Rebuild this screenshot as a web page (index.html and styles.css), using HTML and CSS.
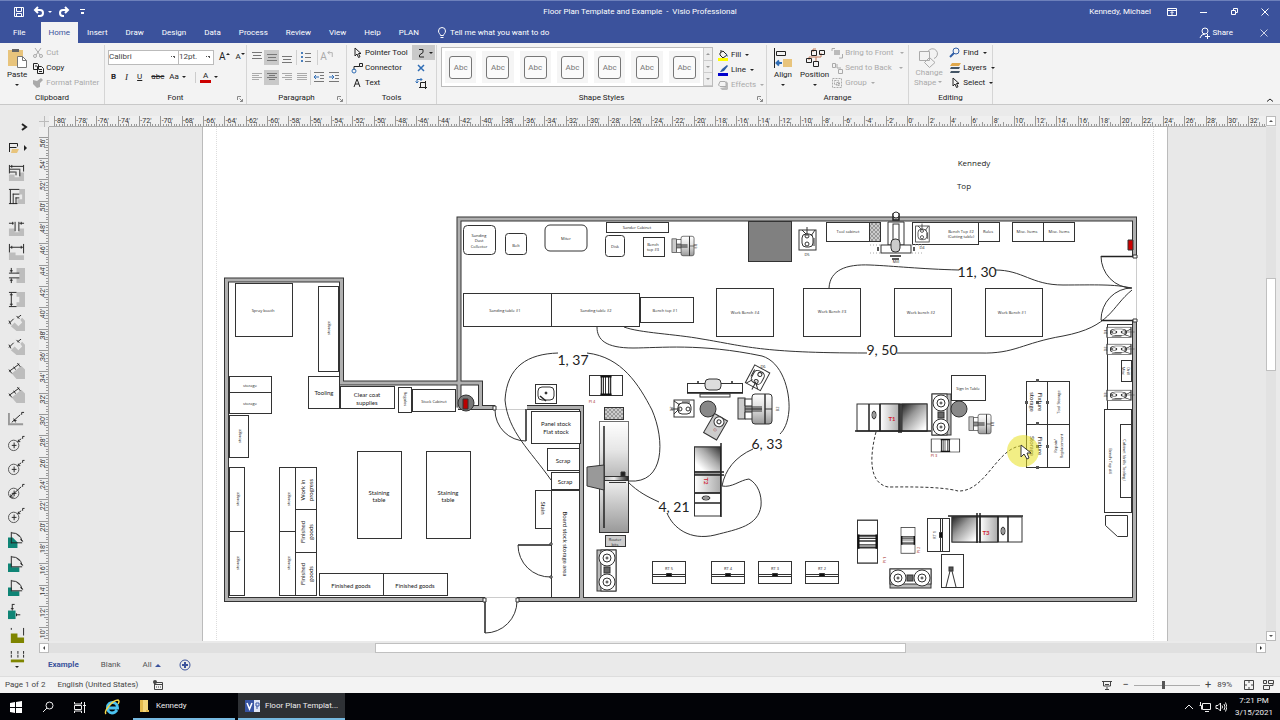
FILE: index.html
```html
<!DOCTYPE html>
<html lang="en">
<head>
<meta charset="utf-8">
<title>Floor Plan Template and Example - Visio Professional</title>
<link rel="stylesheet" href="styles.css">
</head>
<body>
<svg class="defs" aria-hidden="true">
  <symbol id="i-save" viewBox="0 0 12 12"><path class="ln" d="M1.5 1.5h9v9h-9zM3.5 1.5v4h5v-4M3.5 10.500v-3h5v3"/></symbol>
  <symbol id="i-undo" viewBox="0 0 12 12"><path class="ln thick" d="M5 1 2 4l3 3M2 4h5a2.800 2.800 0 0 1 0 6H5"/></symbol>
  <symbol id="i-redo" viewBox="0 0 12 12"><path class="ln thick" d="M7 1l3 3-3 3M10 4H5a2.800 2.800 0 0 0 0 6h1"/></symbol>
  <symbol id="i-cursor" viewBox="0 0 12 12"><path class="ln" d="M4 1v8l2-2 1.500 3.500 1.500-.7L7.500 6.500H10z"/></symbol>
  <symbol id="i-x" viewBox="0 0 12 12"><path class="ln" d="M2.500 2.500l7 7M9.500 2.500l-7 7"/></symbol>
  <symbol id="i-launch" viewBox="0 0 6 6"><path class="ln" d="M.5 4V.5H4M2.500 2.500l3 3M5.500 3v2.500H3"/></symbol>
  <symbol id="d-h2" viewBox="0 0 18 18"><path class="gy" d="M1 10h7v3h9v5H1z"/><path class="bk" d="M1.500 1v9M16.500 1v10M2 4.500h14M4 3v3M14 3v3"/></symbol>
  <symbol id="d-gap" viewBox="0 0 18 18"><path class="gy" d="M1 10h6v4h5v-4h5v8H1z"/><path class="bk" d="M1 4.500h5M5 3v3M7.500 3v10M11.500 3v10M12 4.500h5M14 3v3"/></symbol>
  <symbol id="d-v" viewBox="0 0 18 18"><path class="gy" d="M9 1h9v16H9v-5h3V6H9z"/><path class="bk" d="M1 1.500h8M1 16.500h8M3.500 2v14M2 4h3M2 14h3"/></symbol>
  <symbol id="d-vg" viewBox="0 0 18 18"><path class="gy" d="M9 1h9v16H9v-5h3V7H9z"/><path class="bk" d="M1 6.500h11M1 11.500h11M3.500 1v5M2 4h3M3.500 12v5M2 14h3"/></symbol>
  <symbol id="d-top" viewBox="0 0 18 18"><path class="gy" d="M1 11h6v3h5V9h5v9H1z"/><path class="bk" d="M1.500 1v9M16.500 1v7M2 2.500h14M2 5.500h10M2 8.500h6M12.500 5v8M8.500 8v4M4 1v3"/></symbol>
  <symbol id="d-side" viewBox="0 0 18 18"><path class="gy" d="M12 1h6v16h-8v-5h5V7h-3z"/><path class="bk" d="M1 1.500h11M2.500 2v15M5.500 6v11M8.500 10v7M1 16.500h9M5 6.500h7M8 10.500h4"/></symbol>
  <symbol id="d-diag" viewBox="0 0 18 18"><path class="gy" d="M3 12l4-4 4 4 4-4-2-3 2-2 3 3v11H9z"/><path class="bk" d="M1 9l5-5M1 6l2 4M10 3l4-3M9 1l3 3"/></symbol>
  <symbol id="d-diag2" viewBox="0 0 18 18"><path class="gy" d="M4 11 14 3l4 4v10H9z"/><path class="bk" d="M1 9l11-8M1 7l3 4M10 0l3 4M6 4l2 3"/></symbol>
  <symbol id="d-rad" viewBox="0 0 18 18"><path class="gyl" d="M1 2v12h15"/><path class="bk" d="M4 12 13 4M6 8l2 4M14.500 4V1.500h2.500M6 10h3"/></symbol>
  <symbol id="d-cir" viewBox="0 0 18 18"><circle class="ring" cx="6" cy="11" r="5.500"/><path class="bk" d="M4 11h5M6.500 8v6M10 7l4-3M11 5v2h2M15.500 4V1.500h2"/></symbol>
  <symbol id="d-dia" viewBox="0 0 18 18"><circle class="ring" cx="6" cy="11" r="5.500"/><path class="bk" d="M2 15 14 4M6.500 8v6M4 11h5M3 12v3h3M15.500 4V1.500h2"/></symbol>
  <symbol id="d-ang" viewBox="0 0 18 18"><path class="tl" d="M0 7h5l5 5v6H0z"/><path class="bk" d="M3.500 1v12M3 12.500h12M4 2q9 0 11 9M10 4l2 2M13 9l3 2"/></symbol>
  <symbol id="d-ang2" viewBox="0 0 18 18"><path class="tl" d="M0 9h4v4h8v5H0z"/><path class="bk" d="M3.500 1v11M3 12.500h12M4 2q9 0 11 9M10 4l2 2M13 9l3 2"/></symbol>
  <symbol id="d-ord" viewBox="0 0 18 18"><path class="tl" d="M0 8h8v9H0z"/><path class="bk" d="M4.500 2v6M3 6h3M4 1.500h3M9 12.500h4M9 11v3"/></symbol>
  <symbol id="d-olive" viewBox="0 0 18 18"><path class="ol" d="M3 7h7v4h7v6H3z"/><path class="bk" d="M3.500 1v2M16.500 1v8"/></symbol>
</svg>

<header class="titlebar">
  <div class="quick">
    <button aria-label="Save"><svg class="ic"><use href="#i-save"/></svg></button>
    <button aria-label="Undo"><svg class="ic"><use href="#i-undo"/></svg><i class="dd"></i></button>
    <button aria-label="Redo"><svg class="ic"><use href="#i-redo"/></svg></button>
    <button aria-label="Customize toolbar"><span class="over"></span></button>
  </div>
  <h1>Floor Plan Template and Example&nbsp; -&nbsp; Visio Professional</h1>
  <div class="account">
    <span class="user">Kennedy, Michael</span>
    <button aria-label="Ribbon display"><svg class="ic" viewBox="0 0 12 12"><path class="ln" d="M1.500 2.500h9v7h-9zM1.500 4.500h9M6 9V6M4.500 7 6 5.500 7.500 7"/></svg></button>
    <button aria-label="Minimize"><svg class="ic" viewBox="0 0 12 12"><path class="ln" d="M3 6.500h7"/></svg></button>
    <button aria-label="Restore"><svg class="ic" viewBox="0 0 12 12"><path class="ln" d="M3.500 4.500h4v4h-4zM5.500 4v-1.500h4v4H8"/></svg></button>
    <button aria-label="Close"><svg class="ic"><use href="#i-x"/></svg></button>
  </div>
</header>
<nav class="tabs">
  <button class="file">File</button><button class="on">Home</button><button>Insert</button><button>Draw</button><button>Design</button><button>Data</button><button>Process</button><button>Review</button><button>View</button><button>Help</button><button>PLAN</button>
  <button class="tell"><svg class="ic" viewBox="0 0 12 12"><path class="ln" d="M4.500 8.500C4.500 7 2.500 6.500 2.500 4a3.500 3.500 0 0 1 7 0c0 2.500-2 3-2 4.500zM4.500 10.500h3"/></svg>Tell me what you want to do</button>
  <button class="share"><svg class="ic" viewBox="0 0 12 12"><circle class="ln" cx="6" cy="4" r="3"/><path class="ln" d="M1 11q1-4 5-4M6 9.500h5M8.500 7v5"/></svg>Share</button>
  <button class="closedoc" aria-label="Close document"><svg class="ic"><use href="#i-x"/></svg></button>
</nav>

<section class="ribbon">
  <div class="group"><div class="body clip">
    <button class="big"><svg class="ic20" viewBox="0 0 20 20"><path fill="#e8c47c" d="M1 2h15v16H1z"/><path fill="#666" d="M5 1h7v3H5z"/><path fill="#fff" stroke="#777" d="M10.500 8.500h5l4 4v7h-9z"/><path fill="none" stroke="#777" d="M15.500 8.500v4h4"/></svg>Paste<i class="dd"></i></button>
    <div class="rows">
      <button class="off"><svg class="ic" viewBox="0 0 12 12"><path class="ln" d="M3 1l5 7M9 1 4 8"/><circle class="ln" cx="3" cy="9" r="1.500"/><circle class="ln" cx="9" cy="9" r="1.500"/></svg>Cut</button>
      <button><svg class="ic" viewBox="0 0 12 12"><path class="ln" d="M1.500 1.500h4l1 1v5h-5zM5.500 4.500h4l2 2v5h-6zM7 7.500h3M7 9.500h3M3 4h2"/></svg>Copy</button>
      <button class="off"><svg class="ic" viewBox="0 0 12 12"><path fill="#aaa" d="M1 3l4 1 4-3 2 2-3 3v4l-3 1-4-4z"/></svg>Format Painter</button>
    </div>
  </div><h2>Clipboard</h2></div>

  <div class="group"><div class="body fontg">
    <div class="line">
      <select class="face" aria-label="Font"><option>Calibri</option></select><select class="size" aria-label="Font size"><option>12pt.</option></select>
      <button class="grow" aria-label="Grow font">A<i class="du tiny"></i></button><button class="grow sm" aria-label="Shrink font">A<i class="dd tiny"></i></button>
    </div>
    <div class="line fmt">
      <button><b>B</b></button><button><em>I</em></button><button><u>U</u></button><button><s>abc</s></button><button>Aa<i class="dd"></i></button><button class="color"><span>A</span><i class="dd"></i></button>
    </div>
  </div><h2>Font</h2><svg class="launch"><use href="#i-launch"/></svg></div>

  <div class="group"><div class="body para">
    <div class="line">
      <button aria-label="Top"><svg class="ic" viewBox="0 0 12 12"><path class="ln" d="M1 1.500h10M2 4.500h8M1 7.500h10"/></svg></button>
      <button class="sel" aria-label="Middle"><svg class="ic" viewBox="0 0 12 12"><path class="ln" d="M1 3.500h10M2 6.500h8M1 9.500h10"/></svg></button>
      <button aria-label="Bottom"><svg class="ic" viewBox="0 0 12 12"><path class="ln" d="M1 5.500h10M2 8.500h8M1 11.500h10"/></svg></button>
      <button class="bar" aria-label="Bullets"><svg class="ic" viewBox="0 0 12 12"><path fill="#4a7ebb" d="M1 1h2v2H1zM1 5h2v2H1zM1 9h2v2H1z"/><path class="ln" d="M5 2.500h6M5 6.500h6M5 10.500h6"/></svg></button>
      <button class="bar off rot" aria-label="Rotate text">A<svg class="ic8" viewBox="0 0 8 8"><path class="ln" d="M6 8V3H1M3 1 1 3l2 2"/></svg></button>
    </div>
    <div class="line">
      <button class="off" aria-label="Left"><svg class="ic" viewBox="0 0 12 12"><path class="ln" d="M1 2.500h10M1 4.500h7M1 6.500h10M1 8.500h7"/></svg></button>
      <button class="sel" aria-label="Center"><svg class="ic" viewBox="0 0 12 12"><path class="ln" d="M1 2.500h10M3 4.500h6M1 6.500h10M3 8.500h6"/></svg></button>
      <button class="off" aria-label="Right"><svg class="ic" viewBox="0 0 12 12"><path class="ln" d="M1 2.500h10M4 4.500h7M1 6.500h10M4 8.500h7"/></svg></button>
      <button class="off" aria-label="Justify"><svg class="ic" viewBox="0 0 12 12"><path class="ln" d="M1 2.500h10M1 4.500h10M1 6.500h10M1 8.500h10"/></svg></button>
      <button class="bar tight" aria-label="Decrease indent"><svg class="ic" viewBox="0 0 12 12"><path class="ln" d="M1 1.500h10M7 4.500h4M7 7.500h4M1 10.500h10"/><path stroke="#2f6db5" fill="none" d="M6 6H1M3 4 1 6l2 2"/></svg></button>
      <button aria-label="Increase indent"><svg class="ic" viewBox="0 0 12 12"><path class="ln" d="M1 1.500h10M7 4.500h4M7 7.500h4M1 10.500h10"/><path stroke="#2f6db5" fill="none" d="M1 6h5M4 4l2 2-2 2"/></svg></button>
    </div>
  </div><h2>Paragraph</h2><svg class="launch"><use href="#i-launch"/></svg></div>

  <div class="group"><div class="body tools">
    <div class="rows">
      <button><svg class="ic"><use href="#i-cursor"/></svg>Pointer Tool</button>
      <button><svg class="ic" viewBox="0 0 12 12"><path class="ln" d="M8.500 1.500h3v3h-3zM3 8V4.500h5.500"/><circle cx="3" cy="9" r="2" fill="none" stroke="#2f6db5"/></svg>Connector</button>
      <button><svg class="ic" viewBox="0 0 12 12"><path class="ln" d="M3 10 6 2l3 8M4 7h4"/></svg>Text</button>
    </div>
    <div class="rows">
      <button class="sel free" aria-label="Freeform"><svg class="ic" viewBox="0 0 12 12"><path class="ln" d="M4 2.500h4v3L4.500 8v2H9"/></svg><i class="dd"></i></button>
      <button aria-label="Connection point"><svg class="ic" viewBox="0 0 12 12"><path stroke="#2f6db5" stroke-width="1.500" d="M3 3l6 6M9 3 3 9"/></svg></button>
      <button aria-label="Text block"><svg class="ic" viewBox="0 0 12 12"><path class="ln" d="M5.500 5.500h5v5h-5zM4 10.500h8M10.500 4v8"/><path fill="none" stroke="#2f6db5" d="M2 6V2.500h5M.5 4.500 2 6l1.500-1.500M5.500 1 7 2.500 5.500 4"/></svg></button>
    </div>
  </div><h2>Tools</h2></div>

  <div class="group"><div class="body styles">
    <div class="gallery">
      <button><span>Abc</span></button><button><span>Abc</span></button><button><span>Abc</span></button><button><span>Abc</span></button><button><span>Abc</span></button><button><span>Abc</span></button><button><span>Abc</span></button>
      <div class="spin"><button aria-label="Up"><i class="du tiny"></i></button><button aria-label="Down"><i class="dd"></i></button><button aria-label="More"><i class="dd"></i></button></div>
    </div>
    <div class="rows">
      <button><svg class="ic" viewBox="0 0 12 12"><path class="ln" d="M3 4l3-2 4 4-4 3-3-3zM4 3V1"/><path fill="#4a7ebb" d="M9 4l2 3-1 1z"/><path fill="#ff0" d="M1 9h10v3H1z"/></svg>Fill<i class="dd"></i></button>
      <button><svg class="ic" viewBox="0 0 12 12"><path fill="#2f5da5" d="M3 8l2-3 5-4 1 1-4 5-3 1z"/><path fill="#00c" d="M1 9h10v3H1z"/></svg>Line<i class="dd"></i></button>
      <button class="off"><svg class="ic" viewBox="0 0 12 12"><path fill="#bbb" d="M3 9l2 2h5l1-1V4L9 2v6z"/><path class="ln" d="M3 2.500h5q1 0 1 2v3H3L1.500 6z"/></svg>Effects<i class="dd"></i></button>
    </div>
  </div><h2>Shape Styles</h2><svg class="launch"><use href="#i-launch"/></svg></div>

  <div class="group"><div class="body arrange">
    <button class="big"><svg class="ic20" viewBox="0 0 20 20"><path class="ln" d="M1.500 0v20M3.500 3.500h9v4h-9z"/><path fill="#e8c47c" d="M10 11h9v8h-9z"/><path fill="none" stroke="#2f6db5" stroke-width="2" d="M9 15H4M6 12.500 3.500 15 6 17.500"/></svg>Align<i class="dd"></i></button>
    <button class="big"><svg class="ic20" viewBox="0 0 20 20"><path fill="none" stroke="#c07a5a" d="M8 4v-3h3M4 12V9h12V5M11 9v4"/><path class="ln" d="M6.500 2.500h5v5h-5zM14.500 2.500h5v4h-5zM1.500 10.500h5v4h-5zM8.500 13.500h5v5h-5z"/></svg>Position<i class="dd"></i></button>
    <div class="rows">
      <button class="off"><svg class="ic" viewBox="0 0 12 12"><path fill="#bbb" d="M3 3h6v5H3z"/><path class="ln" d="M1 4V1.500h3M11.500 7v4H8"/></svg>Bring to Front<i class="dd far"></i></button>
      <button class="off"><svg class="ic" viewBox="0 0 12 12"><path class="ln" d="M1.500 1.500h3v4h-3zM7.500 7.500h4v4h-4zM6 2v4h4"/></svg>Send to Back<i class="dd far"></i></button>
      <button class="off"><svg class="ic" viewBox="0 0 12 12"><path class="ln" d="M1.500 1.500h9v9h-9zM3.500 3.500h4v4h-4zM5.500 5.500h3v3h-3z" stroke-dasharray="2 1"/></svg>Group<i class="dd"></i></button>
    </div>
  </div><h2>Arrange</h2></div>

  <div class="group"><div class="body edit">
    <button class="big off"><svg class="ic20" viewBox="0 0 20 20"><path class="ln" d="M.5 3.500h10v9H.5zM10.500 9.500l5.500 5-5.500 5-5-5z"/><path class="ln" d="M9 3.500a5 5 0 1 1 6 7"/></svg>Change<br>Shape<i class="dd"></i></button>
    <div class="rows">
      <button><svg class="ic" viewBox="0 0 12 12"><circle cx="7" cy="4" r="3" fill="none" stroke="#2f5da5"/><path stroke="#2f5da5" stroke-width="2" d="M5 6 1 10"/></svg>Find<i class="dd"></i></button>
      <button><svg class="ic" viewBox="0 0 12 12"><path fill="#e0a84c" d="M3 1h9l-2 3H1z"/><path fill="#456" d="M2 5h9l-1 2H1zM2 9h9l-1 2H1z"/></svg>Layers<i class="dd"></i></button>
      <button><svg class="ic"><use href="#i-cursor"/></svg>Select<i class="dd"></i></button>
    </div>
  </div><h2>Editing</h2></div>
  <button class="collapse" aria-label="Collapse ribbon"><svg class="ic" viewBox="0 0 12 12"><path class="ln" d="M3 7.500 6 5l3 2.500"/></svg></button>
</section>

<main class="work">
  <aside class="stencil">
    <button class="chev" aria-label="Expand"><svg class="ic" viewBox="0 0 12 12"><path class="ln thick" d="M4 3l4 3-4 3"/></svg></button>
    <button class="shapes" aria-label="Shapes"><svg class="ic" viewBox="0 0 12 12"><path class="ln" d="M1.500 1v9M1.500 1.500h8v3M1.500 5.500h7"/><path fill="#e8c47c" d="M4 7h7l-2 4H3z"/></svg><i class="dr"></i></button>
    <svg class="st"><use href="#d-top"/></svg><svg class="st"><use href="#d-side"/></svg>
    <svg class="st skip"><use href="#d-gap"/></svg><svg class="st"><use href="#d-h2"/></svg><svg class="st"><use href="#d-vg"/></svg><svg class="st"><use href="#d-v"/></svg><svg class="st"><use href="#d-diag"/></svg><svg class="st"><use href="#d-diag"/></svg><svg class="st"><use href="#d-diag2"/></svg><svg class="st"><use href="#d-diag2"/></svg><svg class="st"><use href="#d-rad"/></svg><svg class="st"><use href="#d-cir"/></svg><svg class="st"><use href="#d-cir"/></svg><svg class="st"><use href="#d-dia"/></svg><svg class="st"><use href="#d-cir"/></svg><svg class="st"><use href="#d-ang"/></svg><svg class="st"><use href="#d-ang2"/></svg><svg class="st"><use href="#d-ang2"/></svg><svg class="st"><use href="#d-ord"/></svg><svg class="st"><use href="#d-olive"/></svg>
    <svg class="st" viewBox="0 0 18 18"><path class="ol" d="M3 9h14v3H3z"/><path class="bk" d="M3.500 0v8M10.500 0v7M16.500 0v8" stroke-dasharray="3 1"/></svg>
    <i class="dd"></i>
  </aside>
  <div class="editor">
    <div class="corner"></div>
    <svg class="ruler-h" id="rulerH"></svg>
    <button class="sb" aria-label="Scroll up"><i class="du tiny"></i></button>
    <svg class="ruler-v" id="rulerV"></svg>

    <svg class="canvas" viewBox="49 127 1217 514" preserveAspectRatio="xMidYMin meet" role="img" aria-label="Workshop floor plan">
      <defs>
        <linearGradient id="gh"><stop offset="0" stop-color="#fff"/><stop offset="1" stop-color="#aaa"/></linearGradient>
        <linearGradient id="gv" x2="0" y2="1"><stop offset="0" stop-color="#fff"/><stop offset=".5" stop-color="#ddd"/><stop offset="1" stop-color="#999"/></linearGradient>
        <linearGradient id="gb" x2="0" y2="1"><stop offset="0" stop-color="#eee"/><stop offset="1" stop-color="#999"/></linearGradient>
        <linearGradient id="gd" x1="0" y1="1" x2="1" y2="0"><stop offset=".2" stop-color="#fff"/><stop offset=".6" stop-color="#aaa"/><stop offset="1" stop-color="#333"/></linearGradient>
        <linearGradient id="gt" x1="0" y1="0" x2="1" y2="1"><stop offset="0" stop-color="#222"/><stop offset=".4" stop-color="#999"/><stop offset=".9" stop-color="#fff"/></linearGradient>
        <linearGradient id="gr"><stop offset="0" stop-color="#bbb"/><stop offset=".4" stop-color="#eee"/><stop offset="1" stop-color="#222"/></linearGradient>
        <pattern id="hatch" width="4" height="4" patternUnits="userSpaceOnUse"><rect width="4" height="4" fill="#ccc"/><path stroke="#777" stroke-width=".6" d="M0 0l4 4M4 0 0 4"/></pattern>
        <path id="walls" d="M485 599.500H226.500V280H341.500V383H480.500V407.500M459 407.500V219H1134.500V257M458 407.500H495M1134.500 321V599.500H517M527 407.500H581.500V599.500"/>
        <g id="twin"><rect x="-20" y="-9" width="41" height="19" fill="#bbb"/><rect x="-20" y="-9" width="41" height="15" fill="#fff"/><circle cx="-12" r="8"/><circle cx="-12" r="4"/><circle cx="-12" r="1"/><circle cx="12" r="8"/><circle cx="12" r="4"/><circle cx="12" r="1"/><rect x="-3" y="-3" width="6" height="6" fill="#666"/></g>
        <g id="rt"><rect width="33" height="22"/><path d="M0 13h33M0 15h33"/><path fill="#111" d="M14 12h5v3h-5z"/></g>
        <g id="plane"><rect x="-16" y="-10" width="33" height="20"/><path class="m" d="M-4-10V10M5-10V10"/><path d="M-2-9V9M0-9V9M3-9V9"/><path fill="#111" stroke="none" d="M-5-10H6v2H-5zM-5 8H6v2H-5z"/></g>
        <g id="drill"><rect x="-10" y="-9" width="20" height="17"/><rect x="-6" y="-6" width="13" height="11" rx="4"/><circle cx="4" r="2"/><circle cx="-4" r="2"/><path d="M-10 5l4-4M-10-8l6 4M-2-7h8M-4 0h-9"/></g>
        <g id="bandsaw"><rect x="-17" y="-11" width="7" height="21" fill="#ccc"/><path d="M-10-10h8v7h-8zM-10 3h8v7h-8z"/><rect x="-3" y="-15" width="20" height="30" rx="3" fill="url(#gv)"/><path class="m" d="M-10 0H7M10-15v30"/><path d="M-10-2H7M-10 2H7M10 0h7"/></g>
      </defs>
      <rect class="page" x="203" y="127" width="964" height="515"/>
      <path class="edge" d="M202.500 127v515M1167.500 127v515"/><path class="guide" d="M216.500 127v515M1153.500 127v515"/>
      <use href="#walls" class="wall-o"/><use href="#walls" class="wall-i"/>
      <path class="gap" d="M486 597.500h30M496 409.500h30M1136.500 258v62"/>

      <g class="shape crisp">
        <rect x="235" y="283" width="57" height="53"/><rect x="318" y="286" width="20" height="85"/>
        <rect x="229" y="376" width="42" height="16"/><rect x="229" y="392" width="42" height="21"/><rect x="229" y="415" width="19" height="42"/>
        <rect x="229" y="467" width="15" height="64"/><rect x="229" y="531" width="15" height="64"/>
        <rect x="279" y="467" width="16" height="64"/><rect x="279" y="531" width="16" height="64"/>
        <rect x="295" y="467" width="21" height="42"/><rect x="295" y="509" width="21" height="43"/><rect x="295" y="552" width="21" height="43"/>
        <rect x="319" y="573" width="64" height="22"/><rect x="383" y="573" width="64" height="22"/>
        <rect x="357" y="451" width="44" height="87"/><rect x="426" y="451" width="44" height="87"/>
        <rect x="308" y="376" width="31" height="32"/><rect x="340" y="386" width="54" height="22"/><rect x="398" y="387" width="13" height="25"/><rect x="412" y="389" width="43" height="22"/>
        <rect x="606" y="222" width="62" height="10"/><rect x="643" y="237" width="21" height="19"/>
        <rect x="463" y="293" width="88" height="33"/><rect x="551" y="293" width="88" height="33"/><rect x="640" y="297" width="53" height="25"/>
        <rect x="716" y="288" width="57" height="48"/><rect x="803" y="288" width="57" height="48"/><rect x="894" y="288" width="57" height="48"/><rect x="985" y="288" width="57" height="48"/>
        <rect x="748" y="221" width="43" height="40" fill="#808080"/>
        <rect x="826" y="222" width="54" height="19"/><rect x="869" y="222" width="11" height="19" fill="url(#hatch)"/>
        <rect x="912" y="222" width="66" height="22"/><rect x="978" y="222" width="21" height="19"/><rect x="1012" y="222" width="31" height="19"/><rect x="1043" y="222" width="31" height="19"/>
        <rect x="531" y="411" width="49" height="32"/><rect x="547" y="448" width="32" height="22"/><rect x="551" y="472" width="28" height="17"/><rect x="551" y="490" width="28" height="107"/><rect x="535" y="490" width="16" height="38"/>
        <rect x="951" y="375" width="34" height="25"/>
        <rect x="1026" y="381" width="21" height="43"/><rect x="1047" y="381" width="22" height="43"/><rect x="1026" y="424" width="21" height="43"/><rect x="1047" y="424" width="22" height="43"/>
        <rect x="1107" y="324" width="25" height="85"/><rect x="1104" y="409" width="27" height="103"/><rect x="1120" y="424" width="11" height="73"/><rect x="1121" y="360" width="10" height="21"/>
      </g>
      <g class="shape">
        <rect x="463.500" y="225.500" width="32" height="29" rx="4"/><rect x="505.500" y="233.500" width="21" height="21" rx="3"/><rect x="545" y="225" width="42" height="26" rx="5"/><rect x="605.500" y="235.500" width="19" height="21" rx="3"/>
        <path d="M1105.500 515.500h22v21h-10l-12-11z"/>
      </g>

      <g class="shape">
        <path class="m" d="M1101 256.500h33M1101 320.500h33M526 409v32M518 545h33M485 601v32"/>
        <path class="nf" d="M1101 256a31 32 0 0 0 31 32M1101 320a31 32 0 0 1 31-32M495 410a31 31 0 0 0 31 31M518 545a32 32 0 0 0 33 32M485 633a32 32 0 0 0 32-32"/>
        <path d="M1133 255h4v3h-4zM1133 319h4v3h-4zM493 406h3v4h-3zM483 598h3v4h-3zM516 598h3v4h-3zM550 543h2v2h-2zM550 576h2v2h-2z"/>
      </g>

      <g class="flow">
        <path d="M829 288C830 270 846 264 870 265S920 269 959 270M995 270C1023 270 1031 285 1063 285S1115 284 1131 288"/>
        <path d="M624 327C640 333 675 334 702 339C745 346 760 353 867 353M897 353H980C1015 354 1022 343 1063 336C1111 327 1111 307 1132 290"/>
        <path d="M597 327C597 340 606 348 633 348C660 348 700 343 762 356C782 362 790 390 789 410C788 423 784 430 780 434M753 449C735 457 725 470 722 486C732 488 740 480 749 479C758 484 762 495 761 506C758 526 738 529 715 535C690 541 673 528 667 513M659 502C648 497 638 492 628 482"/>
        <path d="M558 353C528 354 507 366 505 400C508 432 530 450 551 480M587 353C622 357 639 385 652 410C665 440 665 484 629 481"/>
        <path class="dash" d="M876 432C870 455 868 483 888 487C900 487 940 486 958 491C985 492 996 450 1020 446"/>
      </g>

      <g class="shape">
        <use href="#bandsaw" transform="translate(683 246) scale(.65)"/>
        <use href="#drill" transform="translate(807 240) rotate(90)"/><use href="#drill" transform="translate(922 234) rotate(90) scale(.8)"/>
        <path d="M888 222h16v23h-16z"/><rect x="881" y="245" width="30" height="8"/><rect x="893" y="224" width="6" height="20"/><rect x="891" y="239" width="9" height="13" rx="4" fill="#ccc"/><path class="m" d="M893 214h6v6h-6zM893 217h6M890 256h11M892 259h7M878 247v4M914 247v4"/><circle cx="896" cy="215" r="3"/><path class="faint" d="M870 245h11M870 253h11M912 245h12M912 253h12"/>
        <path fill="#c00" d="M1128 240h5v10h-5z"/>
        <circle cx="466" cy="403" r="8" fill="#777"/><path fill="#b00" d="M463 399h5v10h-5z"/>
        <rect x="535.500" y="384.500" width="21" height="19"/><rect x="538" y="387" width="16" height="13" rx="4"/><circle cx="546" cy="393" r="1" fill="#000"/><path class="m" d="M540 396l6 5"/>
        <use href="#plane" transform="translate(605.500 385.500)"/>
        <rect x="604.500" y="407.500" width="19" height="12" fill="url(#hatch)"/>
        <rect x="599.500" y="421.500" width="29" height="56" fill="url(#gv)" opacity=".7"/><rect x="599.500" y="480.500" width="29" height="52" fill="url(#gb)"/><path class="m" d="M604 426v102"/><path d="M609 482.500h17"/><path fill="#999" d="M587 467l17-2v25l-17-4z"/><rect x="604.500" y="476.500" width="24" height="4" fill="url(#gr)"/><path fill="#222" d="M621 472h4v4h-4z"/>
        <rect x="605.500" y="535.500" width="20" height="11" fill="#ccc"/>
        <use href="#twin" transform="translate(607 570) rotate(90)"/><use href="#twin" transform="translate(941 415) rotate(-90)"/><use href="#twin" transform="translate(910 578)"/>
        <use href="#rt" x="652.500" y="561.500"/><use href="#rt" x="711.500" y="561.500"/><use href="#rt" x="758.500" y="561.500"/><use href="#rt" x="805.500" y="561.500"/><use href="#rt" transform="translate(927.500 551.500) rotate(-90)"/>
        <rect x="687.500" y="383.500" width="55" height="9"/><rect x="700" y="394" width="30" height="3"/><rect x="705" y="379" width="16" height="11" rx="4" fill="#ddd"/><path class="m" d="M687 393h56M698 381v2M732 381v2"/>
        <use href="#drill" transform="translate(758 378) rotate(-62)"/><use href="#drill" transform="translate(684 409)"/>
        <circle cx="708" cy="409" r="8" fill="#888"/>
        <g transform="translate(716 427) rotate(30)"><rect x="-8" y="-11" width="15" height="22" fill="#ccc"/><circle cy="-6" r="5"/><circle cy="-6" r="2"/></g>
        <use href="#bandsaw" transform="translate(755 409)"/>
        <rect x="694.500" y="447" width="26" height="69"/><rect x="694.500" y="447" width="26" height="25" fill="url(#gd)"/><rect x="694.500" y="474" width="26" height="19" fill="url(#gh)"/><path class="m" d="M721 443v74M694 472h30M694 475h30M695 493h26M695 503h26"/><ellipse cx="706" cy="498" rx="4" ry="2"/><path d="M702 498h8"/>
        <rect x="857" y="404" width="70" height="27"/><rect x="880" y="404" width="20" height="27" fill="url(#gh)"/><rect x="902" y="404" width="25" height="27" fill="url(#gt)"/><path class="m" d="M855 431h76M869 404v27M880 404v27M899 404v29M901 404v29"/><ellipse cx="874" cy="415" rx="2" ry="4"/><path d="M874 411v8"/>
        <circle cx="959" cy="409" r="8" fill="#888"/>
        <use href="#bandsaw" transform="translate(980 424) scale(.65)"/>
        <use href="#plane" transform="translate(945 445.500) scale(.86 .65)"/>
        <use href="#plane" transform="translate(867.500 541) rotate(90) scale(1.300 1)"/><use href="#plane" transform="translate(908 540) rotate(90) scale(.78 .7)"/>
        <rect x="952" y="517" width="70" height="25"/><rect x="952" y="517" width="25" height="25" fill="url(#gt)"/><rect x="980" y="517" width="18" height="25" fill="url(#gh)"/><path class="m" d="M948 516h75M977 513v30M980 513v30M998 516v26M1008 516v26"/><ellipse cx="1003" cy="531" rx="2" ry="4"/><path d="M1003 527v8"/>
        <rect x="941.500" y="554.500" width="22" height="33"/><path d="M946 587l5-20 5 20"/><rect x="949" y="567" width="4" height="4" fill="#555"/>
        <use href="#drill" transform="translate(1119 332) rotate(180) scale(1.200 .6)"/><use href="#drill" transform="translate(1119 349) rotate(180) scale(1.200 .6)"/><use href="#drill" transform="translate(1119 395) rotate(180) scale(1.200 .6)"/>
      </g>

      <g class="t8"><text x="974" y="162">Kennedy</text><text x="964" y="185">Top</text></g>
      <g class="t14"><text x="977" y="271">11, 30</text><text x="882" y="349">9, 50</text><text x="573" y="359">1, 37</text><text x="767" y="443">6, 33</text><text x="674" y="506">4, 21</text></g>
      <g class="t6">
        <text x="324" y="392">Tooling</text><text x="367" y="394">Clear coat</text><text x="367" y="402">supplies</text>
        <text x="379" y="492">Staining</text><text x="379" y="499">table</text><text x="448" y="492">Staining</text><text x="448" y="499">table</text>
        <text x="351" y="585">Finished goods</text><text x="415" y="585">Finished goods</text>
        <text x="556" y="423">Panel stock</text><text x="556" y="431">Flat stock</text><text x="563" y="460">Scrap</text><text x="565" y="481">Scrap</text>
        <text transform="translate(302 490) rotate(-90)">Work in</text><text transform="translate(310 490) rotate(-90)">progress</text>
        <text transform="translate(302 532) rotate(-90)">Finished</text><text transform="translate(310 532) rotate(-90)">goods</text>
        <text transform="translate(302 574) rotate(-90)">Finished</text><text transform="translate(310 574) rotate(-90)">goods</text>
        <text transform="translate(543 508) rotate(90)">Stain</text><text transform="translate(565 544) rotate(90)">Board stock storage area</text>
        <text transform="translate(1040 402) rotate(90)">Fixture</text><text transform="translate(1032 402) rotate(90)">storage</text><text transform="translate(1040 446) rotate(90)">Fixture</text><text transform="translate(1032 446) rotate(90)">Storage</text>
      </g>
      <g class="t4">
        <text x="263" y="310">Spray booth</text><text x="250" y="385">storage</text><text x="250" y="403">storage</text><text x="434" y="401">Stock Cabinet</text>
        <text transform="translate(328 328) rotate(-90)">storage</text><text transform="translate(239 436) rotate(-90)">storage</text><text transform="translate(237 499) rotate(-90)">storage</text><text transform="translate(237 563) rotate(-90)">storage</text><text transform="translate(288 499) rotate(-90)">storage</text><text transform="translate(288 563) rotate(-90)">storage</text><text transform="translate(405 399) rotate(90)">Regalos</text>
        <text x="479" y="235">Sanding</text><text x="479" y="240">Dust</text><text x="479" y="246">Collector</text><text x="516" y="245">Belt</text><text x="566" y="238">Miter</text><text x="637" y="227">Sander Cabinet</text><text x="615" y="246">Disk</text><text x="653" y="244">Bench</text><text x="653" y="249">top #3</text><text transform="translate(695 246) rotate(90)">B3</text>
        <text x="505" y="310">Sanding table #1</text><text x="596" y="310">Sanding table #2</text><text x="665" y="310">Bench top #1</text><text x="745" y="312">Work Bench #4</text><text x="832" y="311">Work Bench #3</text><text x="921" y="312">Work bench #2</text><text x="1012" y="312">Work Bench #1</text>
        <text x="848" y="231">Tool cabinet</text><text x="961" y="231">Bench Top #2</text><text x="961" y="236">(Cutting table)</text><text x="988" y="231">Rules</text><text x="1027" y="231">Misc. Items</text><text x="1059" y="231">Misc. Items</text>
        <text x="896" y="261">Mill</text><text x="807" y="254">D5</text><text x="922" y="247">D4</text><text x="968" y="388">Sign In Table</text>
        <text x="669" y="568">RT 5</text><text x="728" y="568">RT 4</text><text x="775" y="568">RT 3</text><text x="822" y="568">RT 2</text><text transform="translate(934 535) rotate(-90)">RT 1</text><text x="615" y="539">Router</text><text x="615" y="544">bits</text>
        <text transform="translate(777 409) rotate(-90)">B2</text><text transform="translate(671 409) rotate(-90)">D7</text><text x="763" y="366">D6</text><text transform="translate(992 424) rotate(90)">B1</text>
        <text transform="translate(1058 402) rotate(-90)">Tool Storage</text><text transform="translate(1055 446) rotate(-90)">Repair/</text><text transform="translate(1061 446) rotate(-90)">Replacement</text>
        <text transform="translate(1124 460) rotate(90)">Cabinet (drills Tooling)</text><text transform="translate(1110 461) rotate(90)">Bench Top #4</text><text transform="translate(1123 371) rotate(90)">Misc</text><text transform="translate(1128 371) rotate(90)">Drill</text>
        <text transform="translate(1105 332) rotate(-90)">D1</text><text transform="translate(1105 349) rotate(-90)">D2</text><text transform="translate(1105 395) rotate(-90)">D3</text>
        <g class="red"><text x="592" y="401">Pl 4</text><text x="934" y="455">Pl 3</text><text transform="translate(918 550) rotate(-90)">Pl 2</text><text transform="translate(884 560) rotate(-90)">Pl 1</text><text transform="translate(715 430) rotate(-60)">O</text></g>
      </g>
      <g class="t6 redb"><text x="892" y="418">T1</text><text x="986" y="532">T3</text><text transform="translate(706 481) rotate(90)">T2</text></g>
      <g class="handles"><path d="M1036 379h3v3h-3zM1036 422h3v3h-3zM1036 466h3v3h-3zM1025 401h3v3h-3zM1046 401h3v3h-3zM1046 445h3v3h-3zM1036 401h3v3h-3zM1036 445h3v3h-3z"/></g>
      <circle class="halo" cx="1023" cy="451" r="16"/>
      <path class="ptr" d="M1021 445v12l3-3 3 5 2-1-2-5h4z"/>
    </svg>

    <div class="vbar"><div class="thumb"></div><button class="sb" aria-label="Scroll down"><i class="dd"></i></button></div>
    <div class="hbar"><button class="sb" aria-label="Scroll left"><i class="dl"></i></button><div class="track"><div class="thumb"></div></div><button class="sb" aria-label="Scroll right"><i class="dr tiny"></i></button></div>
    <nav class="sheets"><button class="cur">Example</button><button>Blank</button><button>All<i class="du"></i></button><button aria-label="Insert page"><svg class="ic" viewBox="0 0 12 12"><circle class="ln" cx="6" cy="6" r="5"/><path class="ln thick" d="M3 6h6M6 3v6"/></svg></button></nav>
  </div>
</main>

<footer class="status">
  <span>Page 1 of 2</span><span>English (United States)</span>
  <svg class="ic rec" viewBox="0 0 12 12"><path class="ln" d="M2.500 3.500h8v7h-8zM2 5.500h9M4 8h1M6 8h1M8 8h1"/><circle cx="3" cy="3" r="2" fill="#444"/></svg>
  <div class="zoom">
    <svg class="ic" viewBox="0 0 12 12"><path class="ln" d="M1 2.500h10M2.500 3v4h7V3M4 5.500h4M6 8v2M4 10.500h4"/></svg>
    <button aria-label="Zoom out">−</button><input type="range" aria-label="Zoom" min="0" max="100" value="45"><button aria-label="Zoom in">+</button><span class="pct">89%</span>
    <svg class="ic" viewBox="0 0 12 12"><path class="ln" d="M1.500 1.500h9v9h-9zM6 2v2M6 8v2M2 6h2M8 6h2"/></svg>
    <svg class="ic last" viewBox="0 0 12 12"><path class="ln" d="M1.500 1.500h3v3h-3zM6.500 1.500h5v3h-5zM1.500 6.500h6v4h-6zM8 6.500h3v-2"/></svg>
  </div>
</footer>

<footer class="taskbar">
  <button aria-label="Start"><svg class="ic" viewBox="0 0 12 12"><path fill="#fff" d="M0 2l5-1v5H0zM6 1l6-1v6H6zM0 7h5v5l-5-1zM6 7h6v5l-6 0z"/></svg></button>
  <button aria-label="Search"><svg class="ic" viewBox="0 0 12 12"><circle class="ln" cx="7.500" cy="4.500" r="3.500"/><path class="ln" d="M5 7 1 11"/></svg></button>
  <button aria-label="Task view"><svg class="ic" viewBox="0 0 12 12"><path class="ln" d="M.5 1v2h7V1M.5 4.500h7v4h-7zM.5 12v-2h7v2M10.500 1v11M9 4.500h3"/></svg></button>
  <button class="ie" aria-label="Internet Explorer"><svg class="ic16" viewBox="0 0 16 16"><path fill="none" stroke="#4cc3f1" stroke-width="3" d="M13 11q-2 3-5 3a5 5.300 0 1 1 5.500-5H5"/><path fill="none" stroke="#f5d547" stroke-width="1.500" d="M2 15q-2-2 3-8T14 1q2 1 0 4"/></svg></button>
  <button class="app"><svg class="ic16" viewBox="0 0 16 16"><path fill="#f3d67a" d="M4 2h8v12H4z"/><path fill="#e2b94c" d="M4 2h3v12H4zM10 12h3v2h-3z"/></svg>Kennedy</button>
  <button class="app cur"><svg class="ic16" viewBox="0 0 16 16"><path fill="#dfe5f5" d="M9 2h6v12H9z"/><path fill="#3955a3" d="M0 2h9v12H0z"/><path fill="none" stroke="#fff" stroke-width="1.500" d="M2 5l2.500 6L7 5"/><path fill="none" stroke="#3955a3" d="M11 5h3v3h-3zM12 8v3"/></svg>Floor Plan Templat...</button>
  <div class="tray">
    <svg class="ic" viewBox="0 0 12 12"><path class="ln" d="M2 8l4-4 4 4"/></svg>
    <svg class="ic" viewBox="0 0 12 12"><path class="ln" d="M3.500 2.500h8v6h-8zM6 10.500h4M1.500 1v3M.5 4.500h2v4"/></svg>
    <svg class="ic" viewBox="0 0 12 12"><path class="ln" d="M1 4.500h2l2.500-2.500v8L3 7.500H1zM7 4.500q1 1.500 0 3M9 3q2 3 0 6M10.500 1.500q3 4.500 0 9"/></svg>
    <time><span>7:21 PM</span><span>3/15/2021</span></time>
  </div>
</footer>
<script src="rulers.js"></script>
</body>
</html>
```
FILE: styles.css
```css
* { box-sizing: border-box; }
html, body { height: 100%; }
body { margin: 0; display: flex; flex-direction: column; min-height: 100vh; font: 8px/12px Roboto, "Open Sans", sans-serif; color: #222; background: #eaeaea; overflow: hidden; }
button { font: inherit; color: inherit; background: none; border: 0; padding: 0; margin: 0; display: flex; align-items: center; white-space: nowrap; }
h1, h2 { margin: 0; font: inherit; }
.defs { position: absolute; width: 0; height: 0; }
.ic { width: 12px; height: 12px; flex: none; }
.ic8 { width: 7px; height: 7px; flex: none; align-self: flex-start; }
.ic16 { width: 16px; height: 16px; flex: none; }
.ic20 { width: 20px; height: 20px; flex: none; }
.ln { fill: none; stroke: currentColor; stroke-width: 1; }
.thick { stroke-width: 2; }
.dd, .du, .dr, .dl { display: inline-block; flex: none; margin-left: 3px; border: 2px solid transparent; border-top-color: currentColor; border-bottom: 0; }
.du { border: 3px solid transparent; border-bottom-color: #3b529c; border-top: 0; }
.dr { border: 3px solid transparent; border-left-color: #222; border-right: 0; }
.dl { border: 2px solid transparent; border-right-color: #444; border-left: 0; }
.tiny { border-width: 2px; }
.du.tiny { border-top: 0; border-bottom-color: currentColor; }
.dr.tiny { border-right: 0; }
.far { margin-left: 6px; }

.titlebar { flex: none; height: 22px; background: #3b529c; color: #fff; display: grid; grid-template-columns: 1fr auto 1fr; align-items: center; border-top: 1px solid #6d80bb; }
.quick { display: flex; gap: 12px; padding-left: 13px; }
.quick button:nth-child(n+3) { margin-left: -6px; }
.quick button:nth-child(4) { margin-left: -2px; }
.quick button:nth-child(2) { margin-left: -4px; }
.over { width: 5px; height: 5px; border-top: 1px solid #fff; background: linear-gradient(#fff, #fff) center bottom / 3px 2px no-repeat; }
.account { display: flex; justify-content: flex-end; gap: 19px; padding-right: 9px; align-items: center; }
.user { margin-right: -4px; }

.tabs { flex: none; height: 21px; background: #3b529c; color: #fff; display: flex; }
.tabs button { padding: 0 9px; }
.tabs .file { padding: 0 15px 0 13px; }
.tabs .on { background: #f3f3f3; color: #3b529c; padding: 0 8px; }
.tabs .tell { gap: 2px; padding-left: 8px; }
.tabs .share { margin-left: auto; gap: 2px; padding-right: 23px; }
.tabs .closedoc { padding-right: 10px; padding-left: 2px; opacity: .75; }

.ribbon { flex: none; height: 62px; background: #f3f3f3; border-bottom: 1px solid #c8c8c8; display: grid; grid-template-columns: 105px 142px 100px 90px 330px 142px 84px 1fr; }
.group { position: relative; display: flex; flex-direction: column; border-right: 1px solid #d5d5d5; margin: 2px 0 3px; }
.group h2 { text-align: center; line-height: 12px; margin-top: auto; }
.launch { position: absolute; right: 3px; bottom: 2px; width: 6px; height: 6px; color: #888; }
.body { display: flex; }
.rows { display: flex; flex-direction: column; }
.rows button { height: 15px; gap: 1px; }
.rows .ic { margin-right: 1px; }
.off { color: #aaa; }
.big { flex-direction: column; line-height: 11px; gap: 1px; padding-top: 3px; align-self: flex-start; }
.big .dd { margin: 3px 0 0; }
.clip { padding-left: 7px; gap: 5px; }
.fontg, .para { flex-direction: column; }
.line { display: flex; align-items: center; height: 20px; }
.fontg { padding-left: 3px; padding-top: 2px; }
.fontg select { font: inherit; height: 15px; border: 1px solid #bbb; background: #fff; padding: 0; color: #444; appearance: none; background-image: linear-gradient(135deg, #555 50%, transparent 50%), linear-gradient(225deg, #555 50%, transparent 50%); background-size: 2px 2px; background-position: right 5px center, right 3px center; background-repeat: no-repeat; border-radius: 0; }
.fontg .face { width: 71px; }
.fontg .size { width: 35px; border-left: 0; }
.grow { font-size: 10px; margin-left: 5px; }
.grow i { margin: 2px 0 0; align-self: flex-start; }
.fontg .sm { font-size: 8px; margin-left: 6px; }
.fmt { padding-left: 3px; gap: 9px; }
.fmt em { font-family: "Liberation Serif", serif; font-size: 9px; }
.fmt button:nth-child(4) { margin-right: -4px; }
.fmt .color { border-left: 1px solid #ccc; padding-left: 4px; }
.color span { border-bottom: 3px solid #c00; line-height: 8px; padding: 0 3px; }
.para { padding-left: 2px; padding-top: 2px; }
.para button { width: 15px; height: 15px; justify-content: center; color: #777; }
.sel { background: #c9c9c9; }
.para .bar { border-left: 1px solid #d0d0d0; width: 19px; margin-left: 2px; }
.para .tight { width: 16px; margin-left: 1px; }
.para .rot { font-size: 10px; }
.para .off { color: #aaa; }
.tools { padding-left: 4px; gap: 4px; }
.tools .rows:first-child { width: 57px; }
.tools .rows:last-child .ic { margin-left: 3px; }
.free { width: 23px; height: 15px; }
.free .dd { margin: 0; }
.styles { padding: 2px 0 0 4px; gap: 4px; }
.gallery { display: flex; flex: none; width: 272px; height: 40px; border: 1px solid #bbb; background: #fff; align-items: center; }
.gallery > button { flex: 1; height: 32px; justify-content: center; background: #f5f5f5; margin: 0 3px; color: #777; }
.gallery > button span { border: 1px solid #777; border-radius: 3px; width: 23px; height: 23px; line-height: 21px; background: #fafafa; }
.spin { align-self: stretch; width: 9px; display: flex; flex-direction: column; background: #eee; border-left: 1px solid #ccc; }
.spin button { flex: 1; justify-content: center; color: #999; border-bottom: 1px solid #ccc; }
.spin i, .sb i { margin: 0; }
.arrange { padding-left: 6px; }
.arrange .big { margin-right: 7px; }
.arrange .big + .big { margin-right: 2px; }
.edit { padding-left: 5px; gap: 5px; }
.edit .big { line-height: 10px; display: block; text-align: center; }
.edit .big .ic20 { display: block; margin: 0 auto; }
.edit .big .dd { margin: 2px; }
.collapse { justify-self: end; align-self: end; padding: 0 4px 1px 0; }

.work { flex: 1; min-height: 0; display: flex; }
.stencil { flex: none; width: 39px; padding-top: 14px; display: flex; flex-direction: column; color: #222; padding-left: 8px; }
.stencil .chev { height: 16px; padding-left: 10px; }
.stencil .shapes { height: 26px; gap: 1px; }
.st { width: 17px; height: 17px; flex: none; margin: 3px 0 4px; }
.st.skip { margin-top: 10px; }
.stencil .dd { margin: -6px 7px 0; align-self: flex-start; }
.gy { fill: #bdbdbd; } .tl { fill: #0f8576; } .ol { fill: #7f8500; }
.bk { fill: none; stroke: #222; stroke-width: 1; } .gyl { fill: none; stroke: #999; stroke-width: 2; } .ring { fill: none; stroke: #555; }
.editor { flex: 1; min-width: 0; padding-top: 11px; display: grid; grid-template: 11px minmax(0, 1fr) 13px 22px / 10px minmax(0, 1fr) 14px; }
.corner { background: linear-gradient(#bbb, #bbb) center / 1px 100% no-repeat, linear-gradient(#bbb, #bbb) center / 100% 1px no-repeat; }
.ruler-h, .ruler-v { width: 100%; height: 100%; overflow: hidden; background: #efefef; }
.ruler-h { border-bottom: 1px solid #aaa; } .ruler-v { border-right: 1px solid #aaa; }
.ruler-h path, .ruler-v path { stroke: #999; shape-rendering: crispEdges; }
.ruler-h text, .ruler-v text { font-size: 7px; fill: #333; }
.ruler-v text { text-anchor: middle; }
.canvas { width: 100%; height: 100%; background: #e8e8e8; }
.sb { width: 10px; height: 10px; background: #fff; border: 1px solid #bbb; justify-content: center; color: #555; flex: none; }
.vbar { background: #e2e2e2; width: 10px; display: flex; flex-direction: column; justify-content: space-between; }
.vbar .thumb { margin-top: 151px; height: 93px; background: #fff; border: 1px solid #c0c0c0; }
.hbar { grid-column: 1 / 3; display: flex; align-items: center; }
.track { flex: 1; height: 10px; background: #e0e0e0; }
.hbar .thumb { margin-left: 27%; width: 44%; height: 10px; background: #fff; border: 1px solid #c0c0c0; }
.sheets { grid-column: 1 / -1; display: flex; align-items: center; padding-left: 9px; gap: 22px; color: #555; }
.sheets .cur { color: #3b529c; font-weight: 700; }
.sheets button:last-child { color: #3b529c; margin-left: -4px; }

.status { flex: none; height: 17px; background: #f3f3f3; border-top: 1px solid #ddd; display: flex; align-items: center; padding: 0 6px 0 5px; gap: 12px; color: #444; }
.rec { margin-left: 2px; }
.zoom { margin-left: auto; display: flex; align-items: center; gap: 5px; }
.zoom > .ic:first-child { margin-right: 5px; }
.zoom button { font-size: 11px; }
.zoom input { width: 66px; height: 10px; margin: 0; appearance: none; background: linear-gradient(#aaa, #aaa) center / 100% 1px no-repeat; }
.zoom input::-webkit-slider-thumb { appearance: none; width: 3px; height: 8px; background: #555; }
.pct { margin: 0 6px 0 1px; }
.zoom .last { margin-left: 2px; }

.taskbar { flex: none; height: 27px; background: #020307; color: #eee; display: flex; }
.taskbar > button { width: 32px; justify-content: center; }
.taskbar .app { width: 102px; justify-content: flex-start; padding-left: 3px; gap: 4px; border-bottom: 2px solid #76b9e0; margin-left: 5px; }
.taskbar .app.cur { width: 107px; padding-left: 7px; margin-left: 3px; background: #2e3135; }
.tray { margin-left: auto; display: flex; align-items: center; gap: 4px; padding-right: 7px; }
.tray time { display: flex; flex-direction: column; align-items: center; margin-left: 4px; }

.page { fill: #fff; } .edge { stroke: #bbb; fill: none; } .guide { stroke: #ddd; fill: none; stroke-dasharray: 1 1; }
.wall-o { fill: none; stroke: #333; stroke-width: 5; } .wall-i { fill: none; stroke: #b0b0b0; stroke-width: 3; }
.crisp { shape-rendering: crispEdges; }
.gap { stroke: #ccc; fill: none; }
.shape { fill: #fff; stroke: #333; stroke-width: 1; }
.shape .nf { fill: none; } .shape .m { stroke: #222; stroke-width: 1.500; fill: none; } .faint { stroke: #aaa; stroke-dasharray: 1 2; }
.m { stroke-width: 1.500; }
.flow { fill: none; stroke: #333; stroke-width: 1; }
.dash { stroke-dasharray: 3 2; fill: none; }
.canvas text { text-anchor: middle; dominant-baseline: central; font-family: Lato, "Open Sans", sans-serif; fill: #222; }
.canvas .t4 text { font-size: 4px; font-family: "Open Sans", sans-serif; }
.t6 { font-size: 6px; } .t8 { font-size: 8px; } .t14 { font-size: 14px; }
.canvas .t8 text { font-family: "Open Sans", sans-serif; }
.canvas .red text { fill: #a02020; } .canvas .redb text { fill: #d02030; font-weight: 700; }
.handles { fill: #555; }
.halo { fill: #e8e020; opacity: .55; } .ptr { fill: #fff; stroke: #333; }
```
FILE: rulers.js
```js
// Draws the foot marks along the top and left edges of the drawing area.
const NS = "http://www.w3.org/2000/svg";
const STEP = 64 / 3;

function add(parent, name, attrs, text) {
  const el = document.createElementNS(NS, name);
  for (const key in attrs) el.setAttribute(key, attrs[key]);
  if (text) el.textContent = text;
  parent.appendChild(el);
}

const h = document.getElementById("rulerH");
for (let n = 0; n < 57; n++) {
  const x = 5 + n * STEP;
  let d = "";
  for (let k = 0; k < 8; k++) {
    const len = k === 0 ? 11 : k === 4 ? 5 : 3;
    d += `M${x + k * STEP / 8} ${11 - len}v${len}`;
  }
  add(h, "path", { d });
  add(h, "text", { x: x + 1, y: 7 }, `${n * 2 - 80}'`);
}

const v = document.getElementById("rulerV");
for (let n = 0; n < 25; n++) {
  const y = 10 + n * STEP;
  let d = "";
  for (let k = 0; k < 8; k++) {
    const len = k === 0 ? 10 : k === 4 ? 5 : 3;
    d += `M${10 - len} ${y + k * STEP / 8}h${len}`;
  }
  add(v, "path", { d });
  add(v, "text", { transform: `translate(6 ${y + 6}) rotate(-90)` }, `${56 - n * 2}'`);
}
```
